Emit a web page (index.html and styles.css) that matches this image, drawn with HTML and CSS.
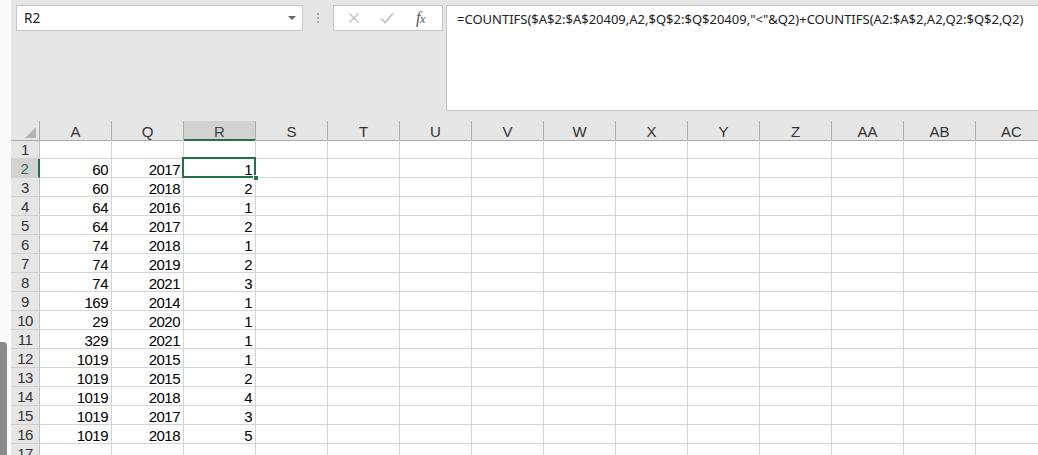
FILE: index.html
```html
<!DOCTYPE html>
<html>
<head>
<meta charset="utf-8">
<link rel="stylesheet" href="styles.css">
</head>
<body>
<div class="app">
  <aside class="edge"><div class="thumb"></div></aside>
  <main class="main">
    <section class="fbar">
      <div class="namebox">
        <span class="name">R2</span>
        <span class="caret"></span>
      </div>
      <div class="grip"><i></i><i></i><i></i></div>
      <div class="tools">
        <svg class="ico" width="12" height="12" viewBox="0 0 12 12"><path d="M1.5 1.5L10.5 10.5M10.5 1.5L1.5 10.5" stroke="#bdbdbd" stroke-width="1.2" fill="none"/></svg>
        <svg class="ico" width="14" height="12" viewBox="0 0 14 12"><path d="M1 6.5L5 10.5L13 1.5" stroke="#bdbdbd" stroke-width="1.6" fill="none"/></svg>
        <span class="fx">f<span class="x">x</span></span>
      </div>
      <div class="formula">=COUNTIFS($A$2:$A$20409,A2,$Q$2:$Q$20409,"&lt;"&amp;Q2)+COUNTIFS(A2:$A$2,A2,Q2:$Q$2,Q2)</div>
    </section>
    <section class="sheet">
      <div class="row head">
        <div class="rh corner"><span class="tri"></span></div>
        <div class="ch">A</div><div class="ch">Q</div><div class="ch sel">R</div><div class="ch">S</div><div class="ch">T</div><div class="ch">U</div><div class="ch">V</div><div class="ch">W</div><div class="ch">X</div><div class="ch">Y</div><div class="ch">Z</div><div class="ch">AA</div><div class="ch">AB</div><div class="ch">AC</div>
      </div>
      <div class="row"><div class="rh">1</div><div class="c"></div><div class="c"></div><div class="c"></div><div class="c"></div><div class="c"></div><div class="c"></div><div class="c"></div><div class="c"></div><div class="c"></div><div class="c"></div><div class="c"></div><div class="c"></div><div class="c"></div><div class="c"></div></div>
      <div class="row"><div class="rh sel">2</div><div class="c">60</div><div class="c">2017</div><div class="c active">1<span class="handle"></span></div><div class="c"></div><div class="c"></div><div class="c"></div><div class="c"></div><div class="c"></div><div class="c"></div><div class="c"></div><div class="c"></div><div class="c"></div><div class="c"></div><div class="c"></div></div>
      <div class="row"><div class="rh">3</div><div class="c">60</div><div class="c">2018</div><div class="c">2</div><div class="c"></div><div class="c"></div><div class="c"></div><div class="c"></div><div class="c"></div><div class="c"></div><div class="c"></div><div class="c"></div><div class="c"></div><div class="c"></div><div class="c"></div></div>
      <div class="row"><div class="rh">4</div><div class="c">64</div><div class="c">2016</div><div class="c">1</div><div class="c"></div><div class="c"></div><div class="c"></div><div class="c"></div><div class="c"></div><div class="c"></div><div class="c"></div><div class="c"></div><div class="c"></div><div class="c"></div><div class="c"></div></div>
      <div class="row"><div class="rh">5</div><div class="c">64</div><div class="c">2017</div><div class="c">2</div><div class="c"></div><div class="c"></div><div class="c"></div><div class="c"></div><div class="c"></div><div class="c"></div><div class="c"></div><div class="c"></div><div class="c"></div><div class="c"></div><div class="c"></div></div>
      <div class="row"><div class="rh">6</div><div class="c">74</div><div class="c">2018</div><div class="c">1</div><div class="c"></div><div class="c"></div><div class="c"></div><div class="c"></div><div class="c"></div><div class="c"></div><div class="c"></div><div class="c"></div><div class="c"></div><div class="c"></div><div class="c"></div></div>
      <div class="row"><div class="rh">7</div><div class="c">74</div><div class="c">2019</div><div class="c">2</div><div class="c"></div><div class="c"></div><div class="c"></div><div class="c"></div><div class="c"></div><div class="c"></div><div class="c"></div><div class="c"></div><div class="c"></div><div class="c"></div><div class="c"></div></div>
      <div class="row"><div class="rh">8</div><div class="c">74</div><div class="c">2021</div><div class="c">3</div><div class="c"></div><div class="c"></div><div class="c"></div><div class="c"></div><div class="c"></div><div class="c"></div><div class="c"></div><div class="c"></div><div class="c"></div><div class="c"></div><div class="c"></div></div>
      <div class="row"><div class="rh">9</div><div class="c">169</div><div class="c">2014</div><div class="c">1</div><div class="c"></div><div class="c"></div><div class="c"></div><div class="c"></div><div class="c"></div><div class="c"></div><div class="c"></div><div class="c"></div><div class="c"></div><div class="c"></div><div class="c"></div></div>
      <div class="row"><div class="rh">10</div><div class="c">29</div><div class="c">2020</div><div class="c">1</div><div class="c"></div><div class="c"></div><div class="c"></div><div class="c"></div><div class="c"></div><div class="c"></div><div class="c"></div><div class="c"></div><div class="c"></div><div class="c"></div><div class="c"></div></div>
      <div class="row"><div class="rh">11</div><div class="c">329</div><div class="c">2021</div><div class="c">1</div><div class="c"></div><div class="c"></div><div class="c"></div><div class="c"></div><div class="c"></div><div class="c"></div><div class="c"></div><div class="c"></div><div class="c"></div><div class="c"></div><div class="c"></div></div>
      <div class="row"><div class="rh">12</div><div class="c">1019</div><div class="c">2015</div><div class="c">1</div><div class="c"></div><div class="c"></div><div class="c"></div><div class="c"></div><div class="c"></div><div class="c"></div><div class="c"></div><div class="c"></div><div class="c"></div><div class="c"></div><div class="c"></div></div>
      <div class="row"><div class="rh">13</div><div class="c">1019</div><div class="c">2015</div><div class="c">2</div><div class="c"></div><div class="c"></div><div class="c"></div><div class="c"></div><div class="c"></div><div class="c"></div><div class="c"></div><div class="c"></div><div class="c"></div><div class="c"></div><div class="c"></div></div>
      <div class="row"><div class="rh">14</div><div class="c">1019</div><div class="c">2018</div><div class="c">4</div><div class="c"></div><div class="c"></div><div class="c"></div><div class="c"></div><div class="c"></div><div class="c"></div><div class="c"></div><div class="c"></div><div class="c"></div><div class="c"></div><div class="c"></div></div>
      <div class="row"><div class="rh">15</div><div class="c">1019</div><div class="c">2017</div><div class="c">3</div><div class="c"></div><div class="c"></div><div class="c"></div><div class="c"></div><div class="c"></div><div class="c"></div><div class="c"></div><div class="c"></div><div class="c"></div><div class="c"></div><div class="c"></div></div>
      <div class="row"><div class="rh">16</div><div class="c">1019</div><div class="c">2018</div><div class="c">5</div><div class="c"></div><div class="c"></div><div class="c"></div><div class="c"></div><div class="c"></div><div class="c"></div><div class="c"></div><div class="c"></div><div class="c"></div><div class="c"></div><div class="c"></div></div>
      <div class="row"><div class="rh">17</div><div class="c"></div><div class="c"></div><div class="c"></div><div class="c"></div><div class="c"></div><div class="c"></div><div class="c"></div><div class="c"></div><div class="c"></div><div class="c"></div><div class="c"></div><div class="c"></div><div class="c"></div><div class="c"></div></div>
    </section>
  </main>
</div>
</body>
</html>
```

FILE: styles.css
```css
* { box-sizing: border-box; }
html, body { margin: 0; padding: 0; }
body {
  width: 1038px;
  height: 455px;
  overflow: hidden;
  background: #ffffff;
  font-family: "Liberation Sans", Arial, sans-serif;
}
.app {
  display: flex;
  width: 1038px;
  height: 455px;
  overflow: hidden;
}
.edge {
  flex: 0 0 11px;
  background: #fafafa;
  display: flex;
  flex-direction: column;
  justify-content: flex-end;
}
.thumb {
  width: 7px;
  height: 113px;
  background: #8a8a8a;
  border-radius: 0 4px 0 0;
}
.main {
  flex: 1 1 auto;
  min-width: 0;
  overflow: hidden;
  background: #e6e6e6;
}
/* formula bar */
.fbar {
  display: flex;
  align-items: flex-start;
  height: 121px;
  padding-top: 5px;
  padding-left: 5px;
}
.namebox {
  width: 287px;
  height: 26px;
  background: #fff;
  border: 1px solid #c6c6c6;
  display: flex;
  align-items: center;
  justify-content: space-between;
  padding: 0 6px 0 7px;
}
.name {
  font-family: "Noto Sans", "Liberation Sans", sans-serif;
  font-size: 13.5px;
  color: #222;
}
.caret {
  width: 0; height: 0;
  border-left: 4px solid transparent;
  border-right: 4px solid transparent;
  border-top: 4px solid #666;
}
.grip {
  width: 30px;
  height: 26px;
  display: flex;
  flex-direction: column;
  align-items: center;
  justify-content: center;
  gap: 2px;
}
.grip i {
  display: block;
  width: 2px; height: 2px;
  background: #a8a8a8;
}
.tools {
  width: 110px;
  height: 26px;
  background: #fff;
  border: 1px solid #c6c6c6;
  display: flex;
  align-items: center;
  padding-left: 14px;
  gap: 20px;
}
.fx {
  font-family: "Liberation Serif", "Times New Roman", serif;
  font-style: italic;
  font-size: 16px;
  color: #555;
  margin-left: 2px;
  letter-spacing: -0.5px;
}
.fx .x { font-size: 12px; }
.formula {
  flex: 1 1 auto;
  margin-left: 3px;
  height: 106px;
  background: #fff;
  border: 1px solid #c6c6c6;
  border-right: none;
  padding: 4px 0 0 10px;
  font-family: "Noto Sans", "Liberation Sans", sans-serif;
  font-size: 13px;
  color: #222;
  white-space: nowrap;
  overflow: hidden;
}
/* sheet */
.sheet {
  background: #fff;
  width: 1040px;
}
.row {
  display: grid;
  grid-template-columns: 29px repeat(14, 72px);
  height: 19px;
  font-size: 15px;
  letter-spacing: -0.5px;
  color: #000;
}
.row.head { background: #e6e6e6; }
.rh {
  background: #e6e6e6;
  border-right: 1px solid #c2c2c2;
  border-bottom: 1px solid #d0d0d0;
  color: #333;
  text-align: center;
  line-height: 15px;
  padding-top: 2px;
}
.rh.sel {
  background: #d2d2d2;
  color: #217346;
  border-right: 2px solid #217346;
}
.corner {
  position: relative;
  border-right: 1px solid #ababab;
  border-bottom: 1px solid #ababab;
}
.tri {
  position: absolute;
  right: 3px;
  bottom: 2px;
  width: 0; height: 0;
  border-left: 11px solid transparent;
  border-bottom: 11px solid #b5b5b5;
}
.ch {
  background: #e6e6e6;
  border-right: 1px solid #ababab;
  border-bottom: 1px solid #ababab;
  text-align: center;
  color: #333;
  line-height: 15px;
  padding-top: 3px;
  letter-spacing: 0;
}
.ch.sel {
  background: #d2d2d2;
  border-bottom: 2px solid #217346;
  color: #444;
}
.c {
  border-right: 1px solid #d4d4d4;
  border-bottom: 1px solid #d4d4d4;
  text-align: right;
  padding: 3px 3px 0 0;
  line-height: 15px;
}
.c.active {
  position: relative;
}
.c.active::after {
  content: "";
  position: absolute;
  left: -2px; top: -2px; right: -1px; bottom: -1px;
  border: 2px solid #217346;
}
.handle {
  position: absolute;
  right: -4px;
  bottom: -4px;
  width: 6px;
  height: 6px;
  background: #217346;
  border: 1px solid #fff;
  z-index: 2;
}
```
